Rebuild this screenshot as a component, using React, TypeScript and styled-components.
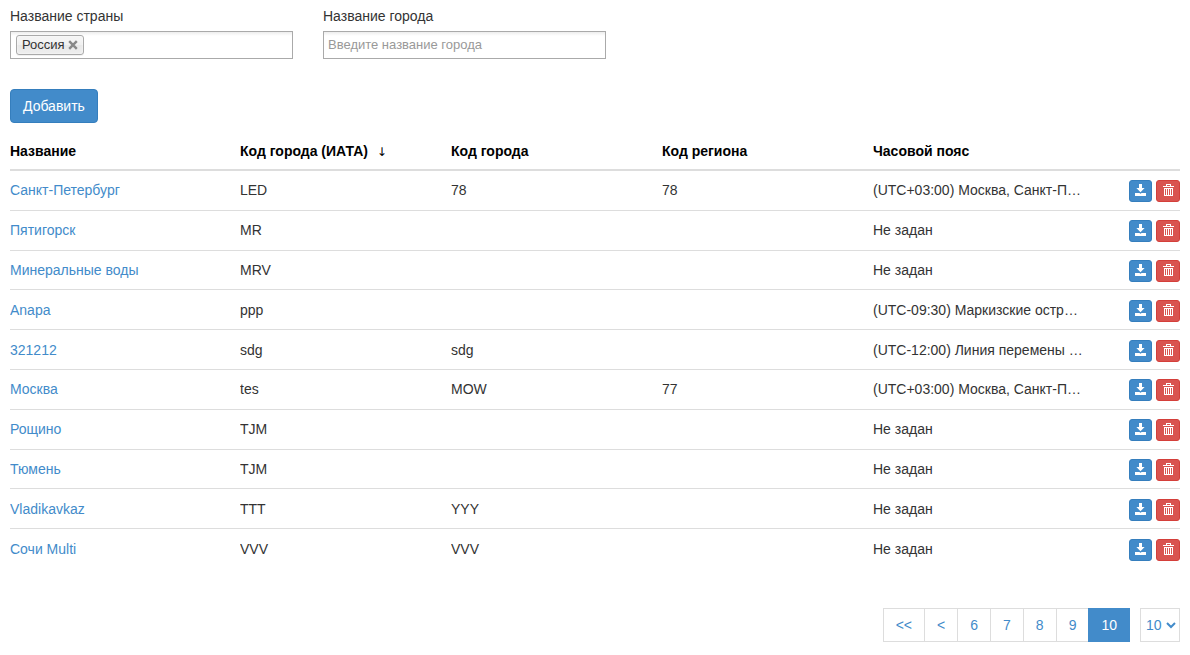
import React from 'react';
import styled, { createGlobalStyle } from 'styled-components';

const GlobalStyle = createGlobalStyle`
  *, *::before, *::after { box-sizing: border-box; }
  body {
    margin: 0;
    background: #fff;
    color: #333;
    font-family: Arial, "Liberation Sans", sans-serif;
    font-size: 14px;
    line-height: 20px;
  }
  button, input, select { font-family: inherit; }
`;

const Page = styled.main`
  padding: 6px 10px 12px;
`;

const Filters = styled.form`
  display: grid;
  grid-template-columns: repeat(2, minmax(0, 283px));
  column-gap: 30px;
  margin-bottom: 30px;
`;

const Field = styled.div`
  display: flex;
  flex-direction: column;
  gap: 5px;
`;

const fieldBox = `
  height: 28px;
  border: 1px solid #aaa;
  background: linear-gradient(#eee 1%, #fff 15%);
`;

const TextInput = styled.input`
  ${fieldBox}
  width: 100%;
  padding: 0 4px 2px;
  border-radius: 0;
  color: #333;
  font-size: 13px;
  outline: 0;
  &::placeholder { color: #999; opacity: 1; }
`;

const TagBox = styled.div`
  ${fieldBox}
  display: flex;
  align-items: center;
  gap: 5px;
  padding: 0 5px;
`;

const Tag = styled.span`
  display: flex;
  align-items: center;
  gap: 3px;
  height: 20px;
  padding: 0 5px 1px;
  border: 1px solid #aaa;
  border-radius: 3px;
  background: linear-gradient(#f4f4f4 20%, #f0f0f0 50%, #e8e8e8 52%, #eee 100%);
  box-shadow: 0 0 2px #fff inset, 0 1px 0 rgba(0, 0, 0, 0.05);
  font-size: 13px;
  line-height: 13px;
`;

const TagRemove = styled.button`
  display: flex;
  padding: 0;
  border: 0;
  background: none;
  color: #888;
  cursor: pointer;
`;

const TagSearch = styled.input`
  flex: 1;
  min-width: 0;
  padding: 0;
  border: 0;
  background: none;
  font-size: 13px;
  outline: 0;
`;

const AddButton = styled.button`
  display: block;
  height: 34px;
  margin-bottom: 10px;
  padding: 0 12px;
  border: 1px solid #357ebd;
  border-radius: 4px;
  background: #428bca;
  color: #fff;
  font-size: 14px;
  cursor: pointer;
`;

const Table = styled.table`
  width: 100%;
  height: 435px;
  table-layout: fixed;
  border-collapse: collapse;
  margin-bottom: 40px;
`;

const NameCol = styled.col`
  width: 230px;
`;

const ActionCol = styled.col`
  width: 96px;
`;

const HeadCell = styled.th`
  padding: 8px 0;
  border-bottom: 2px solid #ddd;
  color: #000;
  text-align: left;
  vertical-align: bottom;
`;

const SortMark = styled.span`
  margin-left: 5px;
  font-family: "DejaVu Sans", sans-serif;
  font-size: 12px;
  font-weight: 400;
  line-height: 12px;
`;

const Cell = styled.td`
  padding: 8px 0;
  border-top: 1px solid #ddd;
  vertical-align: middle;
  overflow: hidden;
  text-overflow: ellipsis;
  white-space: nowrap;
`;

const ActionCell = styled(Cell)`
  padding: 9px 0 7px;
`;

const Actions = styled.div`
  display: flex;
  justify-content: flex-end;
  gap: 4px;
`;

const CityLink = styled.a`
  color: #428bca;
  text-decoration: none;
`;

const IconButton = styled.button<{ $danger?: boolean }>`
  height: 22px;
  padding: 3px 5px 5px;
  border: 1px solid ${(p) => (p.$danger ? '#d43f3a' : '#357ebd')};
  border-radius: 3px;
  background: ${(p) => (p.$danger ? '#d9534f' : '#428bca')};
  color: #fff;
  cursor: pointer;
  svg { display: block; }
`;

const Footer = styled.footer`
  display: flex;
  justify-content: flex-end;
  gap: 10px;
`;

const Pager = styled.nav`
  display: flex;
`;

const PageLink = styled.a<{ $active?: boolean }>`
  height: 34px;
  padding: 6px 12px;
  margin-left: -1px;
  border: 1px solid ${(p) => (p.$active ? '#428bca' : '#ddd')};
  background: ${(p) => (p.$active ? '#428bca' : '#fff')};
  color: ${(p) => (p.$active ? '#fff' : '#428bca')};
  text-decoration: none;
`;

const PageSize = styled.select`
  width: 40px;
  height: 34px;
  padding: 0 1px;
  border: 1px solid #ddd;
  border-radius: 0;
  background: #fff;
  color: #428bca;
  font-size: 14px;
`;

const DownloadIcon = () => (
  <svg width="11" height="12" viewBox="0 0 11 12" fill="currentColor" aria-hidden="true">
    <path d="M4 0h3v4h2.6L5.5 8.2 1.4 4H4z" />
    <path d="M0 9h4.4l1.1 .7L6.6 9H11v3H0z" />
  </svg>
);

const TrashIcon = () => (
  <svg width="12" height="12" viewBox="0 0 12 12" fill="currentColor" aria-hidden="true">
    <path fillRule="evenodd" d="M4 0h5v2h3v1H1V2h3zM5 1v1h3V1z" />
    <path fillRule="evenodd" d="M2 4h9v8H2zM3 5v6h1V5zM5 5v6h1V5zM7 5v6h1V5zM9 5v6h1V5z" />
  </svg>
);

const CrossIcon = () => (
  <svg width="10" height="10" viewBox="0 0 10 10" stroke="currentColor" strokeWidth="2.4" aria-hidden="true">
    <path d="M1.2 1.2l7.6 7.6M8.8 1.2L1.2 8.8" />
  </svg>
);

type City = { name: string; iata: string; code?: string; region?: string; zone?: string };

const MOSCOW = '(UTC+03:00) Москва, Санкт-Петербург, Волгоград';

const cities: City[] = [
  { name: 'Санкт-Петербург', iata: 'LED', code: '78', region: '78', zone: MOSCOW },
  { name: 'Пятигорск', iata: 'MR' },
  { name: 'Минеральные воды', iata: 'MRV' },
  { name: 'Anapa', iata: 'ppp', zone: '(UTC-09:30) Маркизские острова' },
  { name: '321212', iata: 'sdg', code: 'sdg', zone: '(UTC-12:00) Линия перемены дат' },
  { name: 'Москва', iata: 'tes', code: 'MOW', region: '77', zone: MOSCOW },
  { name: 'Рощино', iata: 'TJM' },
  { name: 'Тюмень', iata: 'TJM' },
  { name: 'Vladikavkaz', iata: 'TTT', code: 'YYY' },
  { name: 'Сочи Multi', iata: 'VVV', code: 'VVV' },
];

const pages = ['<<', '<', '6', '7', '8', '9', '10'];

export default function App() {
  return (
    <Page>
      <GlobalStyle />
      <Filters>
        <Field>
          <label htmlFor="country">Название страны</label>
          <TagBox>
            <Tag>
              Россия
              <TagRemove type="button" aria-label="Убрать">
                <CrossIcon />
              </TagRemove>
            </Tag>
            <TagSearch id="country" />
          </TagBox>
        </Field>
        <Field>
          <label htmlFor="city">Название города</label>
          <TextInput id="city" placeholder="Введите название города" />
        </Field>
      </Filters>

      <AddButton type="button">Добавить</AddButton>

      <Table>
        <colgroup>
          <NameCol />
          <col span={4} />
          <ActionCol />
        </colgroup>
        <thead>
          <tr>
            <HeadCell>Название</HeadCell>
            <HeadCell>
              Код города (ИАТА) <SortMark>↓</SortMark>
            </HeadCell>
            <HeadCell>Код города</HeadCell>
            <HeadCell>Код региона</HeadCell>
            <HeadCell>Часовой пояс</HeadCell>
            <HeadCell />
          </tr>
        </thead>
        <tbody>
          {cities.map((c) => (
            <tr key={c.name}>
              <Cell>
                <CityLink href="#">{c.name}</CityLink>
              </Cell>
              <Cell>{c.iata}</Cell>
              <Cell>{c.code}</Cell>
              <Cell>{c.region}</Cell>
              <Cell>{c.zone ?? 'Не задан'}</Cell>
              <ActionCell>
                <Actions>
                  <IconButton type="button" aria-label="Скачать">
                    <DownloadIcon />
                  </IconButton>
                  <IconButton type="button" $danger aria-label="Удалить">
                    <TrashIcon />
                  </IconButton>
                </Actions>
              </ActionCell>
            </tr>
          ))}
        </tbody>
      </Table>

      <Footer>
        <Pager aria-label="Страницы">
          {pages.map((p) => (
            <PageLink key={p} href="#" $active={p === '10'}>
              {p}
            </PageLink>
          ))}
        </Pager>
        <PageSize aria-label="Строк на странице" defaultValue="10">
          <option>10</option>
          <option>25</option>
          <option>50</option>
        </PageSize>
      </Footer>
    </Page>
  );
}
